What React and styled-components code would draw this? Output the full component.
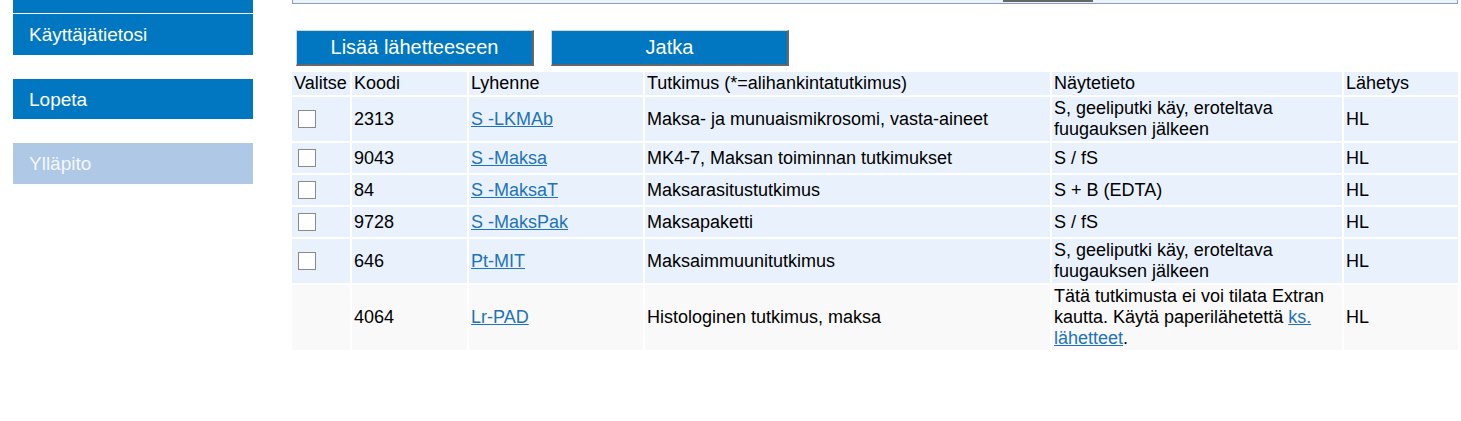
import React from "react";
import styled, { createGlobalStyle } from "styled-components";

const Global = createGlobalStyle`
  html, body { margin: 0; padding: 0; background: #fff; overflow: hidden; }
  body { font-family: "Liberation Sans", Arial, sans-serif; color: #000; }
`;

const Page = styled.div`
  display: flex;
  align-items: flex-start;
  width: 1461px;
  height: 421px;
`;

const Sidebar = styled.nav`
  width: 240px;
  margin-left: 13px;
  display: flex;
  flex-direction: column;
`;

const NavItem = styled.div`
  height: ${(p) => p.$h || 41}px;
  margin-top: ${(p) => p.$gap || 0}px;
  background: ${(p) => (p.$disabled ? "#aec8e6" : "#0077c0")};
  color: ${(p) => (p.$disabled ? "#f3f7fc" : "#fff")};
  font-size: 19px;
  display: flex;
  align-items: center;
  padding-left: 16px;
  padding-top: 1px;
  box-sizing: border-box;
  overflow: hidden;
`;

const Main = styled.main`
  margin-left: 37px;
  width: 1170px;
  display: flex;
  flex-direction: column;
`;

const TopBox = styled.div`
  margin-left: 2px;
  width: 1166px;
  height: 4px;
  box-sizing: border-box;
  background: #eaf2fc;
  border: 1px solid #8d9cc3;
  border-top: none;
  padding-left: 710px;
`;

const TopBoxBar = styled.div`
  width: 90px;
  height: 2px;
  background: #666;
`;

const ButtonRow = styled.div`
  display: flex;
  gap: 17px;
  margin: 26px 0 4px 6px;
`;

const Button = styled.button`
  width: 238px;
  height: 36px;
  box-sizing: border-box;
  background: #0077c0;
  color: #fff;
  font-family: "Liberation Sans", Arial, sans-serif;
  font-size: 20px;
  border-top: 1px solid #d6d6d6;
  border-left: 1px solid #d6d6d6;
  border-right: 2px solid #666;
  border-bottom: 2px solid #666;
  padding: 0;
  cursor: pointer;
`;

const Table = styled.table`
  border-collapse: separate;
  border-spacing: 2px;
  table-layout: fixed;
  width: 1170px;
  font-size: 18px;
  line-height: 21px;
`;

const Th = styled.th`
  font-weight: normal;
  text-align: left;
  background: #e9f2fc;
  padding: 1px 2px;
  white-space: nowrap;
  overflow: hidden;
`;

const Row = styled.tr`
  background: ${(p) => (p.$muted ? "#f9f9f9" : "#e9f2fc")};
`;

const Td = styled.td`
  padding: 1px 2px;
  vertical-align: middle;
`;

const Check = styled.input.attrs({ type: "checkbox" })`
  appearance: none;
  -webkit-appearance: none;
  display: block;
  width: 18px;
  height: 18px;
  margin: 5px 4px;
  box-sizing: border-box;
  background: #fff;
  border: 1px solid #8a8a8a;
`;

const Link = styled.a`
  color: #1f73b7;
  text-decoration: underline;
`;

const cols = [58, 115, 174, 405, 290, 114];

const rows = [
  { check: true, code: "2313", abbr: "S -LKMAb", name: "Maksa- ja munuaismikrosomi, vasta-aineet", sample: "S, geeliputki käy, eroteltava fuugauksen jälkeen" },
  { check: true, code: "9043", abbr: "S -Maksa", name: "MK4-7, Maksan toiminnan tutkimukset", sample: "S / fS" },
  { check: true, code: "84", abbr: "S -MaksaT", name: "Maksarasitustutkimus", sample: "S + B (EDTA)" },
  { check: true, code: "9728", abbr: "S -MaksPak", name: "Maksapaketti", sample: "S / fS" },
  { check: true, code: "646", abbr: "Pt-MIT", name: "Maksaimmuunitutkimus", sample: "S, geeliputki käy, eroteltava fuugauksen jälkeen" },
  {
    check: false,
    code: "4064",
    abbr: "Lr-PAD",
    name: "Histologinen tutkimus, maksa",
    sample: (
      <>
        Tätä tutkimusta ei voi tilata Extran kautta. Käytä paperilähetettä <Link href="#">ks. lähetteet</Link>.
      </>
    ),
  },
];

export default function App() {
  return (
    <>
      <Global />
      <Page>
        <Sidebar>
          <NavItem $h={13} />
          <NavItem $gap={1}>Käyttäjätietosi</NavItem>
          <NavItem $gap={24} $h={40}>Lopeta</NavItem>
          <NavItem $gap={24} $disabled>Ylläpito</NavItem>
        </Sidebar>
        <Main>
          <TopBox>
            <TopBoxBar />
          </TopBox>
          <ButtonRow>
            <Button>Lisää lähetteeseen</Button>
            <Button>Jatka</Button>
          </ButtonRow>
          <Table>
            <colgroup>
              {cols.map((w, i) => (
                <col key={i} style={{ width: w }} />
              ))}
            </colgroup>
            <thead>
              <tr>
                <Th>Valitse</Th>
                <Th>Koodi</Th>
                <Th>Lyhenne</Th>
                <Th>Tutkimus (*=alihankintatutkimus)</Th>
                <Th>Näytetieto</Th>
                <Th>Lähetys</Th>
              </tr>
            </thead>
            <tbody>
              {rows.map((r) => (
                <Row key={r.code} $muted={!r.check}>
                  <Td>{r.check && <Check />}</Td>
                  <Td>{r.code}</Td>
                  <Td>
                    <Link href="#">{r.abbr}</Link>
                  </Td>
                  <Td>{r.name}</Td>
                  <Td>{r.sample}</Td>
                  <Td>HL</Td>
                </Row>
              ))}
            </tbody>
          </Table>
        </Main>
      </Page>
    </>
  );
}
